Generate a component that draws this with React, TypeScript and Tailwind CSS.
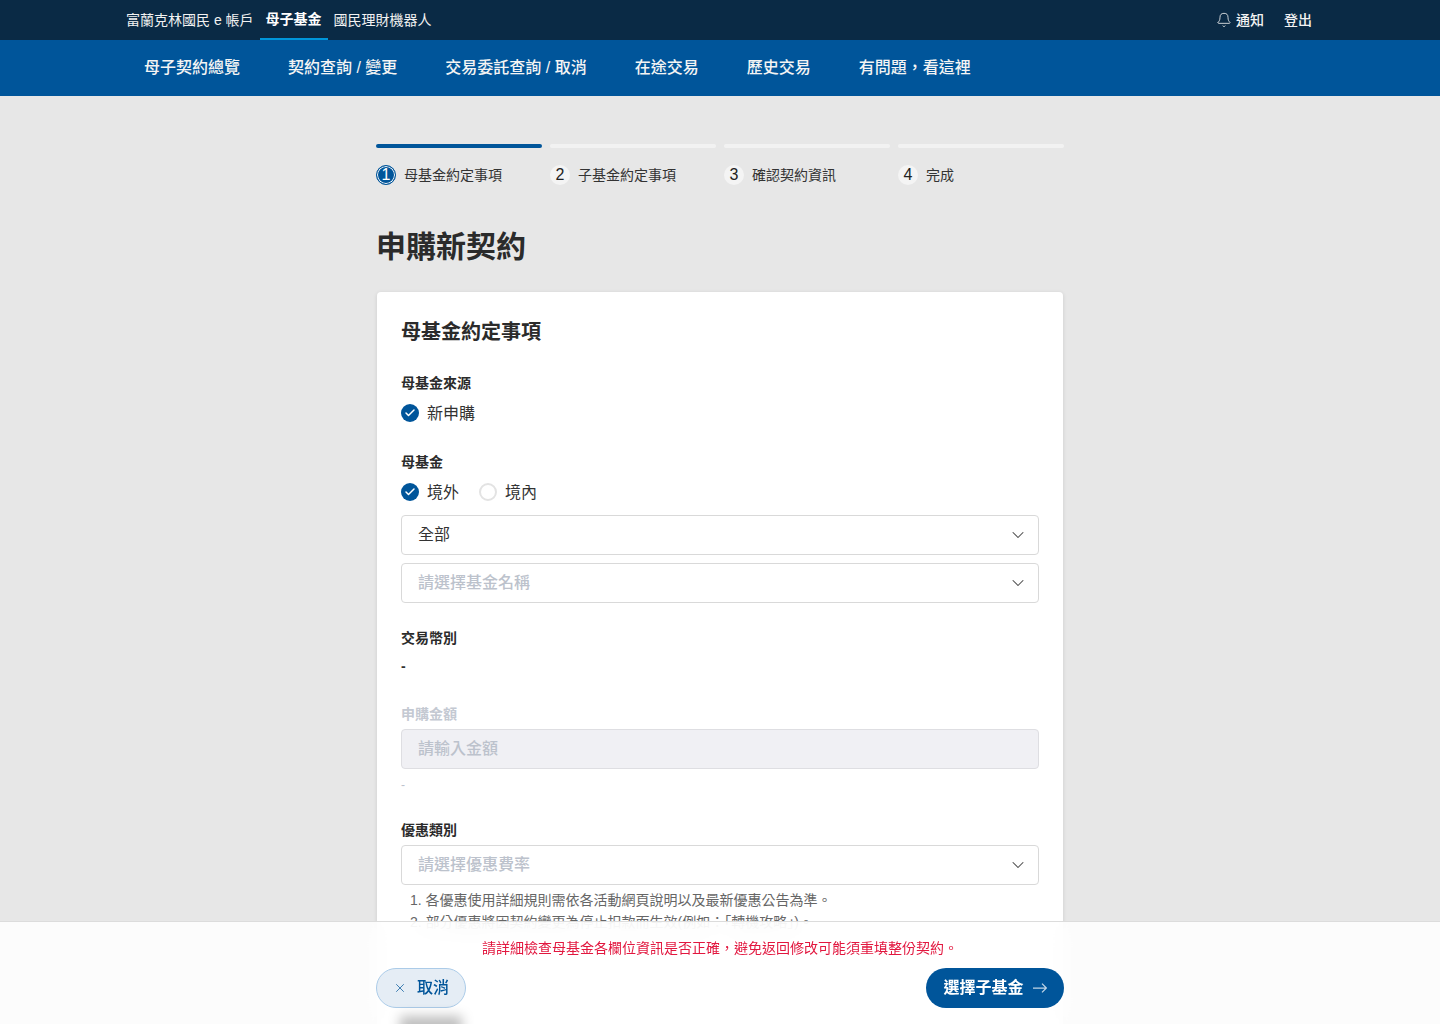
import { Bell, Check, ChevronDown, X } from "lucide-react";

const mainNav = [
  "母子契約總覽",
  "契約查詢 / 變更",
  "交易委託查詢 / 取消",
  "在途交易",
  "歷史交易",
  "有問題，看這裡",
];

const steps = ["母基金約定事項", "子基金約定事項", "確認契約資訊", "完成"];

function Radio({ label, checked }: { label: string; checked?: boolean }) {
  return (
    <label className="flex items-center gap-2 h-6 text-base text-[#333333]">
      {checked ? (
        <span className="flex items-center justify-center w-[18px] h-[18px] rounded-full bg-[#00559a] text-white">
          <Check size={12} strokeWidth={3} />
        </span>
      ) : (
        <span className="w-[18px] h-[18px] rounded-full border-2 border-[#e3e3e3] bg-white" />
      )}
      <span className="pt-[2px]">{label}</span>
    </label>
  );
}

function SelectBox({ value, placeholder }: { value?: string; placeholder?: string }) {
  return (
    <div className="flex items-center justify-between h-10 pl-4 pr-[10px] bg-white border border-[#d9d9d9] rounded text-base">
      <span className={value ? "text-[#333333]" : "text-[#bcc2cc] font-medium"}>
        {value ?? placeholder}
      </span>
      <ChevronDown size={20} strokeWidth={1.25} className="text-[#444444]" />
    </div>
  );
}

function FieldLabel({ children, muted }: { children: string; muted?: boolean }) {
  return (
    <div className={`h-5 text-sm leading-5 font-bold ${muted ? "text-[#c4c9d2]" : "text-[#2b2b2b]"}`}>
      {children}
    </div>
  );
}

export default function App() {
  return (
    <div className="h-screen overflow-hidden bg-[#e7e7e7] font-['Liberation_Sans','Noto_Sans_CJK_TC',sans-serif]">
      {/* 上方帳戶列 */}
      <div className="h-10 bg-[#0a2a45] text-sm text-[#f2f2f2]">
        <div className="flex items-center justify-between w-[1200px] h-full mx-auto pr-2">
          <div className="flex h-full">
            <a className="flex items-center px-[6px]">富蘭克林國民 e 帳戶</a>
            <a className="flex items-center px-[6px] font-bold text-white border-b-2 border-[#0095d9]">母子基金</a>
            <a className="flex items-center px-[6px]">國民理財機器人</a>
          </div>
          <div className="flex items-center gap-5 font-medium">
            <a className="flex items-center gap-[4px]">
              <Bell size={16} strokeWidth={1.25} />
              通知
            </a>
            <a>登出</a>
          </div>
        </div>
      </div>

      <div className="h-14 bg-[#00559a]">
        <div className="flex items-center w-[1200px] h-full mx-auto text-base font-medium text-[#f4f4f4]">
          {mainNav.map((item) => (
            <a key={item} className="px-6">
              {item}
            </a>
          ))}
        </div>
      </div>

      <div className="w-[688px] mx-auto pt-12">
        {/* 步驟 */}
        <div className="grid grid-cols-4 gap-2">
          {steps.map((step, i) => (
            <div key={step}>
              <div className={`h-1 rounded-full ${i === 0 ? "bg-[#00559a]" : "bg-[#f2f2f2]"}`} />
              <div className="flex items-center gap-2 mt-[17px] h-5 text-sm text-[#333333]">
                <span
                  className={`flex items-center justify-center w-5 h-5 rounded-full text-base ${
                    i === 0
                      ? "bg-[#00559a] text-white border border-[#00559a] ring-1 ring-inset ring-white"
                      : "bg-[#f4f4f4] text-[#222222]"
                  }`}
                >
                  {i + 1}
                </span>
                {step}
              </div>
            </div>
          ))}
        </div>

        <h1 className="mt-[38px] h-12 text-[30px] leading-[48px] font-bold text-[#2b2b2b]">申購新契約</h1>

        <div className="mt-[21px] mx-px px-6 pt-[26px] pb-32 bg-white rounded shadow-[0_1px_4px_rgba(0,0,0,0.12)]">
          <h2 className="h-7 text-xl leading-7 font-bold text-[#2b2b2b]">母基金約定事項</h2>

          <div className="mt-[27px]">
            <FieldLabel>母基金來源</FieldLabel>
            <div className="mt-2">
              <Radio label="新申購" checked />
            </div>
          </div>

          <div className="mt-[27px]">
            <FieldLabel>母基金</FieldLabel>
            <div className="flex gap-5 mt-2">
              <Radio label="境外" checked />
              <Radio label="境內" />
            </div>
            <div className="mt-[11px]">
              <SelectBox value="全部" />
            </div>
            <div className="mt-2">
              <SelectBox placeholder="請選擇基金名稱" />
            </div>
          </div>

          <div className="mt-[25px]">
            <FieldLabel>交易幣別</FieldLabel>
            <div className="mt-2 h-5 text-sm leading-5 font-bold text-[#333333]">-</div>
          </div>

          <div className="mt-7">
            <FieldLabel muted>申購金額</FieldLabel>
            <div className="flex items-center h-10 mt-[5px] px-4 bg-[#f0f0f4] border border-[#dedee2] rounded text-base font-medium text-[#bcc2cc]">
              請輸入金額
            </div>
            <div className="mt-[6px] h-5 text-xs leading-5 text-[#bcc2cc]">-</div>
          </div>

          <div className="mt-[25px]">
            <FieldLabel>優惠類別</FieldLabel>
            <div className="mt-[5px]">
              <SelectBox placeholder="請選擇優惠費率" />
            </div>
            <ol className="mt-1 pl-[9px] text-sm leading-[22px] text-[#666666]">
              <li>1. 各優惠使用詳細規則需依各活動網頁說明以及最新優惠公告為準。</li>
              <li>2. 部分優惠將因契約變更為停止扣款而生效(例如：「轉機攻略」)。</li>
            </ol>
          </div>
        </div>
      </div>

      {/* 底部操作列 */}
      <div className="fixed bottom-0 left-0 right-0 h-[103px] bg-white/85 backdrop-blur-md border-t border-[#dcdcdc]">
        <div className="relative w-[688px] mx-auto pt-4">
          {/* 底下內容透過毛玻璃露出的陰影 */}
          <div className="absolute left-6 top-[94px] w-[62px] h-6 bg-black/25 blur-[6px]" />
          <p className="h-5 text-sm leading-5 text-center text-[#e2173f]">
            請詳細檢查母基金各欄位資訊是否正確，避免返回修改可能須重填整份契約。
          </p>
          <div className="flex justify-between mt-[10px]">
            <button className="flex items-center justify-center gap-[10px] w-[90px] h-10 rounded-full bg-[#e5edf5] border border-[#abcbe8] text-base font-medium text-[#00559a]">
              <X size={14} strokeWidth={1.25} />
              取消
            </button>
            <button className="flex items-center justify-center gap-[9px] w-[138px] h-10 rounded-full bg-[#00559a] text-base font-bold text-white">
              選擇子基金
              <svg width="14" height="10" viewBox="0 0 14 10" fill="none" stroke="currentColor" strokeWidth="1.25" className="opacity-75">
                <path d="M0 5h13.2M9 .6 13.4 5 9 9.4" />
              </svg>
            </button>
          </div>
        </div>
      </div>
    </div>
  );
}
